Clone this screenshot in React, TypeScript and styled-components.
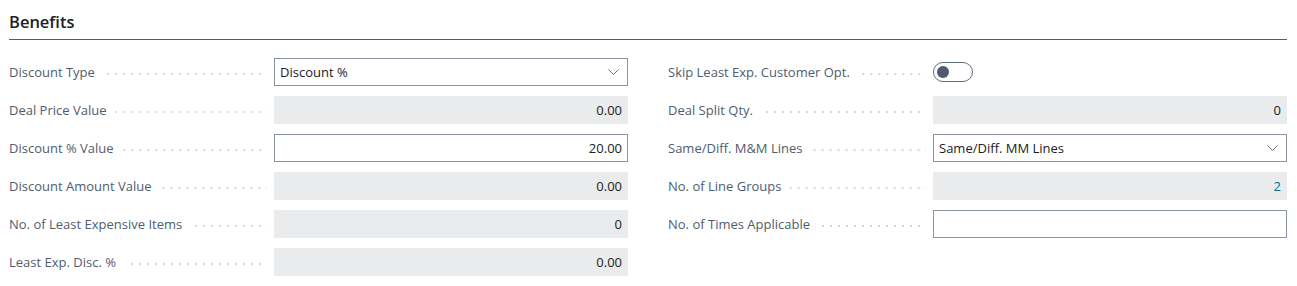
import React from "react";
import styled, { createGlobalStyle } from "styled-components";

const GlobalStyle = createGlobalStyle`
  body {
    margin: 0;
    background: #ffffff;
    font-family: "Open Sans", "Noto Sans", sans-serif;
  }
`;

const Section = styled.section`
  padding: 11px 10px 0 9px;
`;

const Title = styled.h2`
  margin: 0;
  padding: 0 0 6px 0;
  font-size: 16.5px;
  font-weight: 600;
  color: #212121;
  border-bottom: 1px solid #505c6d;
  line-height: 22px;
`;

const Columns = styled.div`
  display: grid;
  grid-template-columns: 1fr 1fr;
  column-gap: 40px;
  padding-top: 18px;
`;

const Column = styled.div`
  display: flex;
  flex-direction: column;
  gap: 10px;
`;

const Row = styled.div`
  display: grid;
  grid-template-columns: 265px 1fr;
  height: 28px;
  align-items: center;
`;

const Label = styled.div`
  display: flex;
  align-items: center;
  font-size: 13px;
  color: #505c6d;
  white-space: nowrap;
  padding-right: 7px;
`;

const Dots = styled.span`
  flex: 1;
  height: 2px;
  margin-left: 9px;
  margin-top: 3px;
  background-image: linear-gradient(to right, #d3d6da 2px, transparent 2px);
  background-size: 8px 2px;
  background-repeat: repeat-x;
  background-position: right center;
`;

const Field = styled.div<{ $readOnly?: boolean; $align?: "left" | "right" }>`
  box-sizing: border-box;
  height: 28px;
  display: flex;
  align-items: center;
  justify-content: ${(p) => (p.$align === "left" ? "space-between" : "flex-end")};
  padding: 0 5px;
  font-size: 13px;
  color: #212121;
  background: ${(p) => (p.$readOnly ? "#eaebec" : "#ffffff")};
  border: 1px solid ${(p) => (p.$readOnly ? "#eaebec" : "#8a94a3")};
`;

const LinkValue = styled.span`
  color: #00718c;
`;

const Chevron = styled.svg`
  width: 11px;
  height: 6px;
  margin-right: 3px;
`;

const Toggle = styled.div`
  box-sizing: border-box;
  width: 40px;
  height: 20px;
  border: 1px solid #616e7f;
  border-radius: 10px;
  display: flex;
  align-items: center;
  padding-left: 3px;
`;

const Knob = styled.span`
  width: 12px;
  height: 12px;
  border-radius: 50%;
  background: #505c6d;
`;

function FieldRow({ label, children }: { label: string; children: React.ReactNode }) {
  return (
    <Row>
      <Label>
        {label}
        <Dots />
      </Label>
      {children}
    </Row>
  );
}

function SelectField({ value }: { value: string }) {
  return (
    <Field $align="left">
      <span>{value}</span>
      <Chevron viewBox="0 0 11 6">
        <path d="M0.5 0.5 L5.5 5.5 L10.5 0.5" fill="none" stroke="#6b7583" strokeWidth="1" />
      </Chevron>
    </Field>
  );
}

export default function App() {
  return (
    <>
      <GlobalStyle />
      <Section>
        <Title>Benefits</Title>
        <Columns>
          <Column>
            <FieldRow label="Discount Type">
              <SelectField value="Discount %" />
            </FieldRow>
            <FieldRow label="Deal Price Value">
              <Field $readOnly>0.00</Field>
            </FieldRow>
            <FieldRow label="Discount % Value">
              <Field>20.00</Field>
            </FieldRow>
            <FieldRow label="Discount Amount Value">
              <Field $readOnly>0.00</Field>
            </FieldRow>
            <FieldRow label="No. of Least Expensive Items">
              <Field $readOnly>0</Field>
            </FieldRow>
            <FieldRow label="Least Exp. Disc. %">
              <Field $readOnly>0.00</Field>
            </FieldRow>
          </Column>
          <Column>
            <FieldRow label="Skip Least Exp. Customer Opt.">
              <Toggle>
                <Knob />
              </Toggle>
            </FieldRow>
            <FieldRow label="Deal Split Qty.">
              <Field $readOnly>0</Field>
            </FieldRow>
            <FieldRow label="Same/Diff. M&M Lines">
              <SelectField value="Same/Diff. MM Lines" />
            </FieldRow>
            <FieldRow label="No. of Line Groups">
              <Field $readOnly>
                <LinkValue>2</LinkValue>
              </Field>
            </FieldRow>
            <FieldRow label="No. of Times Applicable">
              <Field />
            </FieldRow>
          </Column>
        </Columns>
      </Section>
    </>
  );
}
